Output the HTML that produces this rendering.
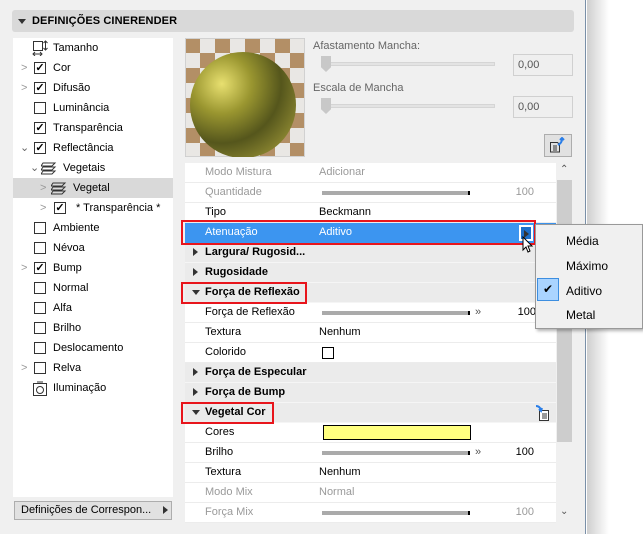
<!DOCTYPE html>
<html><head><meta charset="utf-8"><style>
*{box-sizing:border-box;margin:0;padding:0}
body{width:643px;height:534px;overflow:hidden;background:#fff;font-family:"Liberation Sans",Arial,sans-serif;font-size:11px;color:#000;position:relative}
.a{position:absolute}
#panel{left:0;top:0;width:586px;height:534px;background:#f0f0f0;border-right:1px solid #7a90a8}
#shadow{left:587px;top:0;width:22px;height:534px;background:linear-gradient(to right,#cfcfcf,#fff)}
.hdr{left:12px;top:10px;width:562px;height:22px;background:#d9d9d9;border-radius:3px;font-weight:bold;font-size:11px;line-height:22px;padding-left:20px;letter-spacing:.1px}
.tri{width:0;height:0;border-left:4px solid transparent;border-right:4px solid transparent;border-top:5px solid #333}
.trr{width:0;height:0;border-top:4px solid transparent;border-bottom:4px solid transparent;border-left:5px solid #333}
#tree{left:13px;top:38px;width:160px;height:459px;background:#fff}
.tr{position:absolute;left:0;width:160px;height:20px;line-height:20px}
.cb{position:absolute;top:4px;width:12px;height:12px;border:1px solid #333;background:#fff;font-size:11px;line-height:10px;text-align:center;font-weight:bold}
.chev{position:absolute;top:0;color:#999;font-size:11px}
.lbl{position:absolute;top:0}
#list{left:185px;top:163px;width:371px;height:360px;background:#fff;overflow:hidden}
.r{position:absolute;left:0;width:371px;height:20px;line-height:19px;border-bottom:1px solid #ececec}
.r .k{position:absolute;left:20px}
.r .v{position:absolute;left:134px}
.g{color:#9a9a9a}
.sec{background:#ebebeb;font-weight:bold;border-bottom:1px solid #f5f5f5}
.sl{position:absolute;left:137px;top:8px;width:148px;height:4px;background:#aaa;border-right:2px solid #000}
.n{position:absolute;right:22px}
.red{position:absolute;border:2px solid #e8151c}
.r .trr{position:absolute;left:8px;top:5px}
</style></head><body>
<div id="panel" class="a"></div>
<div id="shadow" class="a"></div>
<div class="a hdr">DEFINIÇÕES CINERENDER</div>
<div class="a tri" style="left:18px;top:19px"></div>

<div id="tree" class="a">
 <div class="tr" style="top:0"><svg class="a" style="left:19px;top:2px" width="16" height="16"><rect x="1.5" y="1.5" width="9" height="9" fill="none" stroke="#333"/><path d="M13.5 1v9M11.5 3l2-2 2 2M11.5 8l2 2 2-2M1 14h9M3 12l-2 2 2 2M8 12l2 2-2 2" stroke="#333" fill="none"/></svg><span class="lbl" style="left:40px">Tamanho</span></div>
 <div class="tr" style="top:20px"><span class="chev" style="left:8px">&gt;</span><div class="cb" style="left:21px">✓</div><span class="lbl" style="left:40px">Cor</span></div>
 <div class="tr" style="top:40px"><span class="chev" style="left:8px">&gt;</span><div class="cb" style="left:21px">✓</div><span class="lbl" style="left:40px">Difusão</span></div>
 <div class="tr" style="top:60px"><div class="cb" style="left:21px"></div><span class="lbl" style="left:40px">Luminância</span></div>
 <div class="tr" style="top:80px"><div class="cb" style="left:21px">✓</div><span class="lbl" style="left:40px">Transparência</span></div>
 <div class="tr" style="top:100px"><span class="chev" style="left:7px;color:#666">⌄</span><div class="cb" style="left:21px">✓</div><span class="lbl" style="left:40px">Reflectância</span></div>
 <div class="tr" style="top:120px"><span class="chev" style="left:17px;color:#666">⌄</span><svg class="a" style="left:28px;top:3px" width="16" height="14"><path d="M2 2h12l-3 3H0zM2 6h12l-3 3H0zM2 10h12l-3 3H0z" fill="none" stroke="#333"/></svg><span class="lbl" style="left:50px">Vegetais</span></div>
 <div class="tr" style="top:140px;background:#d9d9d9"><span class="chev" style="left:27px">&gt;</span><svg class="a" style="left:38px;top:3px" width="16" height="14"><path d="M2 2h12l-3 3H0zM2 6h12l-3 3H0zM2 10h12l-3 3H0z" fill="none" stroke="#333"/></svg><span class="lbl" style="left:60px">Vegetal</span></div>
 <div class="tr" style="top:160px"><span class="chev" style="left:27px">&gt;</span><div class="cb" style="left:41px">✓</div><span class="lbl" style="left:63px">* Transparência *</span></div>
 <div class="tr" style="top:180px"><div class="cb" style="left:21px"></div><span class="lbl" style="left:40px">Ambiente</span></div>
 <div class="tr" style="top:200px"><div class="cb" style="left:21px"></div><span class="lbl" style="left:40px">Névoa</span></div>
 <div class="tr" style="top:220px"><span class="chev" style="left:8px">&gt;</span><div class="cb" style="left:21px">✓</div><span class="lbl" style="left:40px">Bump</span></div>
 <div class="tr" style="top:240px"><div class="cb" style="left:21px"></div><span class="lbl" style="left:40px">Normal</span></div>
 <div class="tr" style="top:260px"><div class="cb" style="left:21px"></div><span class="lbl" style="left:40px">Alfa</span></div>
 <div class="tr" style="top:280px"><div class="cb" style="left:21px"></div><span class="lbl" style="left:40px">Brilho</span></div>
 <div class="tr" style="top:300px"><div class="cb" style="left:21px"></div><span class="lbl" style="left:40px">Deslocamento</span></div>
 <div class="tr" style="top:320px"><span class="chev" style="left:8px">&gt;</span><div class="cb" style="left:21px"></div><span class="lbl" style="left:40px">Relva</span></div>
 <div class="tr" style="top:340px"><svg class="a" style="left:20px;top:3px" width="14" height="15"><rect x="0.5" y="2.5" width="13" height="12" fill="none" stroke="#333"/><circle cx="7" cy="9" r="3.5" fill="none" stroke="#333"/><path d="M4 1h6" stroke="#333"/></svg><span class="lbl" style="left:40px">Iluminação</span></div>
</div>
<div class="a" style="left:14px;top:501px;width:158px;height:19px;border:1px solid #adadad;background:#e1e1e1;line-height:17px;padding-left:6px">Definições de Correspon...</div>
<div class="a trr" style="left:163px;top:506px"></div>

<svg class="a" style="left:185px;top:38px" width="120" height="119">
 <defs><radialGradient id="sp" cx="0.3" cy="0.3" r="0.8"><stop offset="0" stop-color="#e8e070"/><stop offset="0.35" stop-color="#9a9630"/><stop offset="0.7" stop-color="#55561c"/><stop offset="1" stop-color="#8a8530"/></radialGradient>
 <pattern id="ck" width="30" height="30" patternUnits="userSpaceOnUse"><rect width="30" height="30" fill="#e4e2de"/><rect width="15" height="15" fill="#a07440"/><rect x="15" y="15" width="15" height="15" fill="#a07440"/></pattern></defs>
 <rect x="0.5" y="0.5" width="119" height="118" fill="url(#ck)" stroke="#ccc"/>
 <rect x="0.5" y="0.5" width="119" height="118" fill="#fff" opacity="0.2"/>
 <circle cx="58" cy="67" r="53" fill="url(#sp)"/>
</svg>

<div class="a" style="left:313px;top:40px;color:#666">Afastamento Mancha:</div>
<div class="a" style="left:321px;top:62px;width:174px;height:4px;background:#e3e3e3;border:1px solid #d5d5d5"></div>
<div class="a" style="left:321px;top:56px;width:10px;height:16px;background:#c8c8c8;clip-path:polygon(0 0,100% 0,100% 70%,50% 100%,0 70%)"></div>
<div class="a" style="left:513px;top:54px;width:60px;height:22px;border:1px solid #d0d0d0;background:#efefef;line-height:20px;padding-left:4px;color:#555">0,00</div>
<div class="a" style="left:313px;top:82px;color:#666">Escala de Mancha</div>
<div class="a" style="left:321px;top:104px;width:174px;height:4px;background:#e3e3e3;border:1px solid #d5d5d5"></div>
<div class="a" style="left:321px;top:98px;width:10px;height:16px;background:#c8c8c8;clip-path:polygon(0 0,100% 0,100% 70%,50% 100%,0 70%)"></div>
<div class="a" style="left:513px;top:96px;width:60px;height:22px;border:1px solid #d0d0d0;background:#efefef;line-height:20px;padding-left:4px;color:#555">0,00</div>
<div class="a" style="left:544px;top:134px;width:28px;height:23px;border:1px solid #adadad;background:#e1e1e1"></div>
<svg class="a" style="left:549px;top:137px" width="18" height="17"><path d="M1.5 5.5h7l2 2v7.5h-9z" fill="none" stroke="#333"/><path d="M4 9h4M4 11h4M4 13h4" stroke="#333"/><path d="M9 8c2-1 4-3 4-6M11 3l2-2 2 2" stroke="#2a7ee8" stroke-width="2" fill="none"/></svg>

<div id="list" class="a">
 <div class="r g" style="top:0"><span class="k">Modo Mistura</span><span class="v">Adicionar</span></div>
 <div class="r g" style="top:20px"><span class="k">Quantidade</span><div class="sl"></div><span class="n">100</span></div>
 <div class="r" style="top:40px"><span class="k">Tipo</span><span class="v">Beckmann</span></div>
 <div class="r" style="top:60px;background:#3c95f0;color:#fff;border-color:#3c95f0"><span class="k">Atenuação</span><span class="v">Aditivo</span><div style="position:absolute;left:334px;top:2px;width:14px;height:16px;border:2px solid #fff;background:#1e6fc8"><div class="trr" style="position:absolute;left:3px;top:3px;border-left-color:#333"></div></div></div>
 <div class="r sec" style="top:80px"><div class="trr"></div><span class="k">Largura/ Rugosid...</span></div>
 <div class="r sec" style="top:100px"><div class="trr"></div><span class="k">Rugosidade</span></div>
 <div class="r sec" style="top:120px"><div class="tri" style="position:absolute;left:7px;top:7px"></div><span class="k">Força de Reflexão</span></div>
 <div class="r" style="top:140px"><span class="k">Força de Reflexão</span><div class="sl"></div><span style="position:absolute;left:290px;top:0;color:#555">»</span><span class="n" style="right:20px">100</span></div>
 <div class="r" style="top:160px"><span class="k">Textura</span><span class="v">Nenhum</span></div>
 <div class="r" style="top:180px"><span class="k">Colorido</span><div style="position:absolute;left:137px;top:4px;width:12px;height:12px;border:1px solid #000"></div></div>
 <div class="r sec" style="top:200px"><div class="trr"></div><span class="k">Força de Especular</span></div>
 <div class="r sec" style="top:220px"><div class="trr"></div><span class="k">Força de Bump</span></div>
 <div class="r sec" style="top:240px"><div class="tri" style="position:absolute;left:7px;top:7px"></div><span class="k">Vegetal Cor</span>
  <svg style="position:absolute;left:349px;top:1px" width="18" height="18"><path d="M5.5 6.5h9v10h-9z" fill="#fff" stroke="#333"/><path d="M8 10h5M8 12h5M8 14h5" stroke="#333"/><path d="M2 2c2 0 4 1 5 4M5 5l2 2 1-3" stroke="#2a7ee8" stroke-width="2" fill="none"/></svg></div>
 <div class="r" style="top:260px"><span class="k">Cores</span><div style="position:absolute;left:138px;top:2px;width:148px;height:15px;background:#ffff80;border:1px solid #000"></div></div>
 <div class="r" style="top:280px"><span class="k">Brilho</span><div class="sl"></div><span style="position:absolute;left:290px;top:0;color:#555">»</span><span class="n">100</span></div>
 <div class="r" style="top:300px"><span class="k">Textura</span><span class="v">Nenhum</span></div>
 <div class="r g" style="top:320px"><span class="k">Modo Mix</span><span class="v">Normal</span></div>
 <div class="r g" style="top:340px"><span class="k">Força Mix</span><div class="sl"></div><span class="n">100</span></div>
</div>
<div class="a" style="left:557px;top:180px;width:15px;height:262px;background:#cdcdcd"></div>
<div class="a" style="left:560px;top:164px;color:#555;font-size:10px">⌃</div>
<div class="a" style="left:560px;top:506px;color:#555;font-size:10px">⌄</div>

<div class="red" style="left:181px;top:220px;width:355px;height:25px"></div>
<div class="red" style="left:181px;top:282px;width:126px;height:22px"></div>
<div class="red" style="left:181px;top:402px;width:93px;height:22px"></div>

<svg class="a" style="left:522px;top:236px" width="12" height="18"><path d="M1 1v13l3-3 2 5 2-1-2-5h4z" fill="#fff" stroke="#000"/></svg>

<div class="a" style="left:535px;top:224px;width:108px;height:105px;background:#f0f0f0;border:1px solid #999;box-shadow:2px 2px 3px rgba(0,0,0,.3)"></div>
<div class="a" style="left:537px;top:278px;width:22px;height:23px;background:#aad4ff;border:1px solid #3d8ee0;text-align:center;line-height:21px;font-size:12px">✔</div>
<div class="a" style="left:566px;top:234px;font-size:12px">Média</div>
<div class="a" style="left:566px;top:259px;font-size:12px">Máximo</div>
<div class="a" style="left:566px;top:284px;font-size:12px">Aditivo</div>
<div class="a" style="left:566px;top:308px;font-size:12px">Metal</div>
</body></html>
